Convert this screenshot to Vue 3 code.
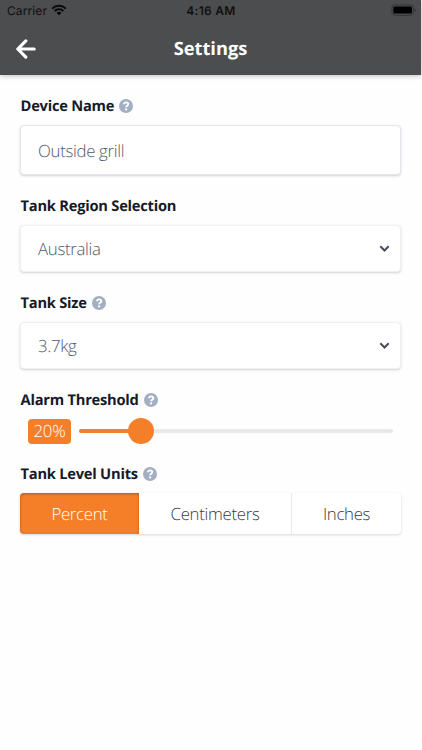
<script setup>
import { ref } from 'vue'

const deviceName = ref('Outside grill')
const region = ref('Australia')
const tankSize = ref('3.7kg')
const threshold = ref(20)
const units = ['Percent', 'Centimeters', 'Inches']
const unit = ref('Percent')
</script>

<template>
  <div class="screen">
    <header class="header">
      <div class="status">
        <div class="carrier">
          <span>Carrier</span>
          <svg class="wifi" viewBox="0 0 16 12" width="16" height="12">
            <path d="M1.2 4.6a9.8 9.8 0 0 1 13.6 0" />
            <path d="M3.6 7.1a6.4 6.4 0 0 1 8.8 0" />
            <path class="dot" d="M8 11.3 5.6 8.9a3.5 3.5 0 0 1 4.8 0z" />
          </svg>
        </div>
        <span class="time">4:16 AM</span>
        <svg class="battery" viewBox="0 0 26 12" width="26" height="12">
          <rect x="0.9" y="0.9" width="21.6" height="10.4" rx="3" class="shell" />
          <rect x="2.4" y="2.6" width="18.6" height="7" rx="1.4" />
          <path d="M23.7 4.4c.9.4 1.1 1 1.1 1.7s-.2 1.3-1.1 1.7z" class="cap" />
        </svg>
      </div>
      <div class="nav">
        <svg class="back" viewBox="0 0 20 20" width="20" height="20">
          <path d="M9.8 1.9 1.8 10l8 8.1M2.2 10h16" />
        </svg>
        <h1>Settings</h1>
        <span></span>
      </div>
    </header>

    <main class="form">
      <div class="label">
        <span>Device Name</span>
        <svg class="help" viewBox="0 0 14 14"><circle cx="7" cy="7" r="7" /><path d="M4.8 5.2C5.2 4 6 3.4 7.1 3.4c1.3 0 2.2.8 2.2 1.9 0 1.5-2.2 1.5-2.2 3" /><circle class="point" cx="7.1" cy="10.4" r="1.15" /></svg>
      </div>
      <div class="field text-field">{{ deviceName }}</div>

      <div class="label"><span>Tank Region Selection</span></div>
      <div class="field">
        <span>{{ region }}</span>
        <svg class="chevron" viewBox="0 0 10 7"><path d="M1.2 1.2 5 5l3.8-3.8" /></svg>
      </div>

      <div class="label">
        <span>Tank Size</span>
        <svg class="help" viewBox="0 0 14 14"><circle cx="7" cy="7" r="7" /><path d="M4.8 5.2C5.2 4 6 3.4 7.1 3.4c1.3 0 2.2.8 2.2 1.9 0 1.5-2.2 1.5-2.2 3" /><circle class="point" cx="7.1" cy="10.4" r="1.15" /></svg>
      </div>
      <div class="field">
        <span>{{ tankSize }}</span>
        <svg class="chevron" viewBox="0 0 10 7"><path d="M1.2 1.2 5 5l3.8-3.8" /></svg>
      </div>

      <div class="label">
        <span>Alarm Threshold</span>
        <svg class="help" viewBox="0 0 14 14"><circle cx="7" cy="7" r="7" /><path d="M4.8 5.2C5.2 4 6 3.4 7.1 3.4c1.3 0 2.2.8 2.2 1.9 0 1.5-2.2 1.5-2.2 3" /><circle class="point" cx="7.1" cy="10.4" r="1.15" /></svg>
      </div>
      <div class="slider">
        <span class="value">{{ threshold }}%</span>
        <div class="track">
          <div class="fill" :style="{ width: threshold + '%' }"></div>
          <div class="thumb" :style="{ left: threshold + '%' }"></div>
        </div>
      </div>

      <div class="label">
        <span>Tank Level Units</span>
        <svg class="help" viewBox="0 0 14 14"><circle cx="7" cy="7" r="7" /><path d="M4.8 5.2C5.2 4 6 3.4 7.1 3.4c1.3 0 2.2.8 2.2 1.9 0 1.5-2.2 1.5-2.2 3" /><circle class="point" cx="7.1" cy="10.4" r="1.15" /></svg>
      </div>
      <div class="segments">
        <button v-for="u in units" :key="u" type="button" :class="{ active: u === unit }" @click="unit = u">{{ u }}</button>
      </div>
    </main>
  </div>
</template>

<style>
body {
  margin: 0;
  background: #fefefe;
}
</style>

<style scoped>
.screen {
  box-sizing: border-box;
  height: 750px;
  overflow: hidden;
  background: #fefefe;
  font-family: "Open Sans", sans-serif;
  text-rendering: geometricPrecision;
}
.header {
  height: 75px;
  margin-right: 1px;
  background: #4c4d4f;
  box-shadow: 0 1px 5px rgba(0, 0, 0, 0.25);
}
.status {
  display: grid;
  grid-template-columns: 1fr auto 1fr;
  align-items: center;
  height: 20px;
  padding: 0 4px 0 7px;
  font-family: Inter, sans-serif;
  font-size: 12px;
  color: #101011;
}
.carrier {
  display: flex;
  align-items: center;
  gap: 4px;
  letter-spacing: 0.1px;
}
.time {
  margin-right: 2px;
  font-weight: 600;
  letter-spacing: 0.3px;
}
.wifi {
  fill: none;
  stroke: #08080a;
  stroke-width: 2;
}
.wifi .dot {
  fill: #08080a;
  stroke: none;
}
.battery {
  justify-self: end;
  fill: #000;
}
.battery .shell {
  fill: none;
  stroke: #2d2e2f;
  stroke-width: 0.8;
}
.battery .cap {
  fill: #2d2e2f;
}
.nav {
  display: grid;
  grid-template-columns: 1fr auto 1fr;
  align-items: center;
  height: 55px;
  padding: 0 16px;
}
.back {
  margin-top: 3px;
  fill: none;
  stroke: #fff;
  stroke-width: 3.2;
  stroke-linecap: round;
  stroke-linejoin: round;
}
h1 {
  margin: 0;
  padding-top: 2px;
  font-size: 18.3px;
  font-weight: 700;
  line-height: 53px;
  color: #fff;
}
.form {
  display: flex;
  flex-direction: column;
  padding: 18px 21px 0 20px;
}
.label {
  display: flex;
  align-items: center;
  gap: 5px;
  height: 24px;
  margin-bottom: 8px;
  padding-left: 0.5px;
  font-size: 14.7px;
  font-weight: 700;
  letter-spacing: -0.24px;
  line-height: 22px;
  color: #161a27;
  white-space: nowrap;
}
.label span {
  padding-top: 2px;
}
.help {
  width: 14px;
  height: 14px;
  margin-top: 2px;
  fill: #a2aec1;
}
.help path {
  fill: none;
  stroke: #fff;
  stroke-width: 1.9;
}
.help .point {
  fill: #fff;
}
.field {
  box-sizing: border-box;
  display: flex;
  align-items: center;
  justify-content: space-between;
  height: 47px;
  margin-bottom: 18px;
  padding: 0 10px 0 17px;
  border: 1px solid #eff1f4;
  border-radius: 4px;
  background: #fff;
  box-shadow: 0 1px 3px rgba(0, 0, 0, 0.13), 0 1px 2px rgba(0, 0, 0, 0.06);
  font-size: 16.8px;
  font-weight: 300;
  letter-spacing: -0.3px;
  line-height: 23px;
  color: #50596a;
}
.text-field {
  height: 50px;
  border-color: #e4e7ed;
}
.chevron {
  width: 11px;
  height: 7.7px;
  fill: none;
  stroke: #454c5c;
  stroke-width: 1.8;
}
.slider {
  display: flex;
  align-items: center;
  gap: 8px;
  height: 26px;
  margin: -1px 8px 17px;
}
.value {
  width: 43px;
  height: 25px;
  border-radius: 4px;
  background: #f57f29;
  font-size: 16.8px;
  font-weight: 300;
  letter-spacing: -0.3px;
  line-height: 24px;
  text-align: center;
  color: #fff;
}
.track {
  position: relative;
  flex: 1;
  height: 4px;
  border-radius: 2px;
  background: #e8e8e8;
}
.fill {
  height: 4px;
  border-radius: 2px;
  background: #f57f29;
}
.thumb {
  position: absolute;
  top: 50%;
  width: 26px;
  height: 26px;
  margin-left: -0.5px;
  border-radius: 50%;
  background: #f57f29;
  transform: translate(-50%, -50%);
}
.segments {
  display: grid;
  grid-template-columns: 119px 153px 1fr;
  height: 41px;
  border-radius: 4px;
  background: #fff;
  box-shadow: 0 1px 3px rgba(0, 0, 0, 0.16);
}
.segments button {
  padding: 0;
  border: 0;
  border-right: 1px solid #e9eaec;
  background: transparent;
  font: 300 16.8px/40px "Open Sans", sans-serif;
  letter-spacing: -0.3px;
  text-rendering: inherit;
  color: #343840;
}
.segments button:last-child {
  border-right: 0;
}
.segments .active {
  border-right: 0;
  border-radius: 4px 0 0 4px;
  background: #f57f29;
  box-shadow: inset 0 1px 3px rgba(90, 30, 0, 0.4);
  color: #fff;
}
</style>
